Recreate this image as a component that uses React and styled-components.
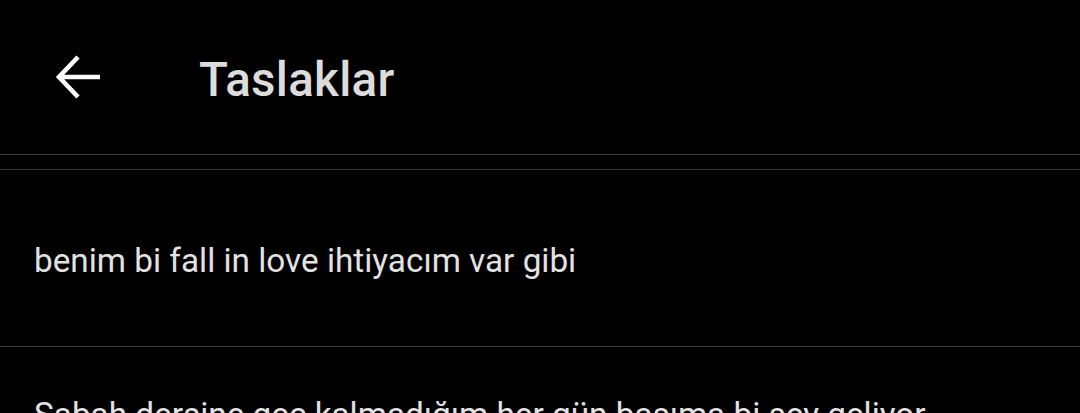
import styled, { createGlobalStyle } from 'styled-components';

const GlobalStyle = createGlobalStyle`
  html, body {
    margin: 0;
    padding: 0;
    background: #000;
  }
  body {
    font-family: Roboto, "Noto Sans", sans-serif;
    color: #e7e9ea;
    overflow: hidden;
  }
`;

const drafts = [
  { id: 1, text: 'benim bi fall in love ihtiyacım var gibi' },
  { id: 2, text: 'Sabah dersine geç kalmadığım her gün başıma bi şey geliyor', top: true },
];

export default function App() {
  return (
    <Page>
      <GlobalStyle />
      <Header>
        <BackButton aria-label='Geri'>
          <svg width='48' height='48' viewBox='0 0 48 48' fill='none'>
            <path
              d='M5 24H46M24 4L5 24L24 44'
              stroke='#fff'
              strokeWidth='4.6'
              strokeLinecap='butt'
              strokeLinejoin='miter'
            />
          </svg>
        </BackButton>
        <Title>Taslaklar</Title>
      </Header>
      <List>
        {drafts.map((d) => (
          <Row key={d.id} $top={d.top}>
            <DraftText>{d.text}</DraftText>
          </Row>
        ))}
      </List>
    </Page>
  );
}

const Page = styled.div`
  width: 1080px;
  height: 413px;
  background: #000;
  overflow: hidden;
`;

const Header = styled.header`
  height: 155px;
  display: flex;
  align-items: center;
  padding: 0 0 0 54px;
  box-sizing: border-box;
  border-bottom: 1px solid #393939;
`;

const BackButton = styled.button`
  background: none;
  border: none;
  padding: 0;
  width: 48px;
  height: 48px;
  display: flex;
  align-items: center;
  justify-content: center;
  margin-right: 97px;
  cursor: pointer;
`;

const Title = styled.h1`
  margin: 0;
  font-size: 47.5px;
  font-weight: 500;
  color: #dcdcdc;
  letter-spacing: 0.3px;
  padding-top: 6px;
`;

const List = styled.div`
  margin-top: 14px;
  border-top: 1px solid #393939;
`;

const Row = styled.div`
  min-height: 177px;
  box-sizing: border-box;
  display: flex;
  align-items: ${(p) => (p.$top ? 'flex-start' : 'center')};
  padding: ${(p) => (p.$top ? '45px 34px 0' : '6px 34px 0')};
  border-bottom: 1px solid #393939;
`;

const DraftText = styled.p`
  margin: 0;
  font-size: 33.3px;
  line-height: 46px;
  color: #e2e2e2;
  font-weight: 400;
`;
